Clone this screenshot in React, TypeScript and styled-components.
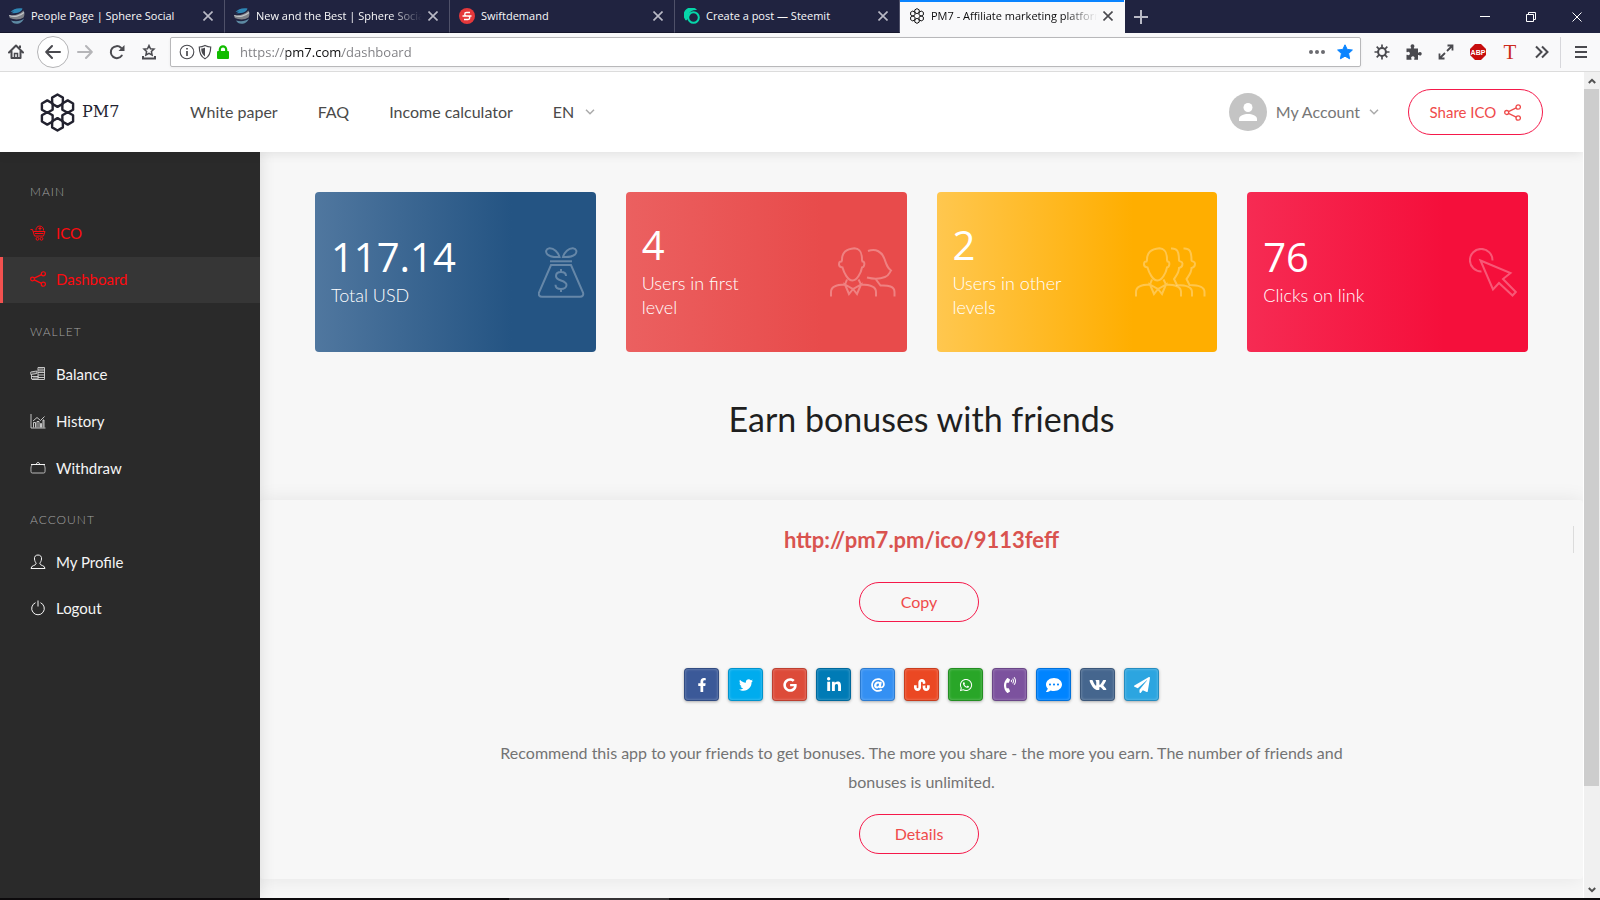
import React from "react";
import styled, { createGlobalStyle } from "styled-components";
import {
  FaFacebookF,
  FaTwitter,
  FaGoogle,
  FaLinkedinIn,
  FaAt,
  FaStumbleupon,
  FaWhatsapp,
  FaPhoneVolume,
  FaCommentDots,
  FaVk,
  FaPaperPlane,
} from "react-icons/fa";

const uiFont = `"Open Sans", "Noto Sans", sans-serif`;
const pageFont = `Lato, "Liberation Sans", sans-serif`;

const GlobalStyle = createGlobalStyle`
  *, *::before, *::after { box-sizing: border-box; }
  body { margin: 0; background: #f7f7f7; font-family: ${pageFont}; }
  button, select, input { font: inherit; color: inherit; background: none; border: 0; padding: 0; margin: 0; }
  button { cursor: pointer; }
  a { color: inherit; text-decoration: none; }
  h1, h2, p, ul { margin: 0; padding: 0; }
  ul { list-style: none; }
  svg { display: block; flex: none; }
`;

/* ---------- browser window ---------- */

const Window = styled.div`
  display: flex;
  flex-direction: column;
  min-height: 100vh;
`;

const TabStrip = styled.div`
  display: flex;
  height: 33px;
  background: #202340;
  color: #f9f9fa;
  font-family: ${uiFont};
  font-size: 11px;
  font-weight: 500;
`;

const Tab = styled.div<{ $active?: boolean }>`
  display: flex;
  align-items: center;
  flex: 0 1 225px;
  min-width: 0;
  gap: 6px;
  padding: 0 5px 0 9px;
  color: ${(p) => (p.$active ? "#0c0c0d" : "#f9f9fa")};
  background: ${(p) => (p.$active ? "#f9f9fa" : "transparent")};
  border-right: 1px solid ${(p) => (p.$active ? "#f9f9fa" : "#4f5169")};
  border-bottom: 1px solid ${(p) => (p.$active ? "#f9f9fa" : "#14162c")};
  box-shadow: ${(p) => (p.$active ? "inset 0 2px 0 #0a84ff" : "none")};
`;

const TabLabel = styled.button<{ $fade?: boolean }>`
  flex: 1;
  min-width: 0;
  overflow: hidden;
  white-space: nowrap;
  text-align: left;
  line-height: 20px;
  mask-image: ${(p) =>
    p.$fade ? "linear-gradient(to left, transparent, #000 32px)" : "none"};
`;

const TabClose = styled.button<{ $active?: boolean }>`
  display: grid;
  place-items: center;
  width: 22px;
  height: 22px;
  margin-left: -6px;
  color: ${(p) => (p.$active ? "#4a4a4f" : "#b9bac6")};
`;

const NewTab = styled.button`
  display: grid;
  place-items: center;
  width: 32px;
  color: #b9bac6;
`;

const WindowControls = styled.div`
  display: flex;
  margin-left: auto;
`;

const WindowButton = styled.button`
  display: grid;
  place-items: center;
  width: 46px;
  color: #fff;
`;

const Toolbar = styled.div`
  display: flex;
  align-items: center;
  height: 39px;
  padding-right: 3px;
  background: #f9f9fa;
  border-bottom: 1px solid #dcdcdc;
  color: #4a4a4f;
  z-index: 3;
`;

const ToolButton = styled.button<{ $dim?: boolean }>`
  display: grid;
  place-items: center;
  width: 32px;
  height: 32px;
  color: ${(p) => (p.$dim ? "#b5b5b8" : "inherit")};
`;

const BackButton = styled(ToolButton)`
  margin: 0 0 0 5px;
  background: #fff;
  border: 1px solid #b4b4b6;
  border-radius: 50%;
`;

const AddressBar = styled.div`
  display: flex;
  align-items: center;
  flex: 1;
  height: 30px;
  gap: 2px;
  margin: 0 5px;
  padding: 0 2px 0 8px;
  background: #fff;
  border: 1px solid #b8b8ba;
  border-radius: 2px;
  box-shadow: 0 1px 3px rgba(0, 0, 0, 0.06);
`;

const AddressInput = styled.input`
  flex: 1;
  min-width: 0;
  margin-left: 7px;
  font-family: ${uiFont};
  font-size: 13px;
  line-height: 20px;
  outline: none;
  -webkit-text-fill-color: transparent;
  background: linear-gradient(to right, #7c7c80 0 46px, #0c0c0d 46px 102px, #7c7c80 102px);
  background-clip: text;
`;

const AddressAction = styled.button`
  display: grid;
  place-items: center;
  width: 26px;
  height: 26px;
`;

const ToolSeparator = styled.span`
  width: 1px;
  height: 31px;
  margin: 0 4px 0 2px;
  background: #d7d7db;
`;

const Viewport = styled.div`
  display: flex;
  flex: 1;
  align-items: stretch;
`;

const ScrollTrack = styled.div`
  display: flex;
  flex-direction: column;
  width: 17px;
  border-left: 1px solid #fff;
  background: #f0f0f0;
  color: #505050;
  z-index: 3;
`;

const ScrollArrow = styled.button`
  display: grid;
  place-items: center;
  height: 17px;
`;

const ScrollThumb = styled.div`
  height: 88%;
  width: 15px;
  background: #cdcdcd;
`;

const ScrollRange = styled.div`
  flex: 1;
`;

const Taskbar = styled.div`
  display: flex;
  height: 2px;
  padding-left: 509px;
  background: #0d0b0d;
`;

const TaskbarItem = styled.span`
  width: 160px;
  background: #353335;
`;

/* ---------- web page ---------- */

const Page = styled.div`
  display: flex;
  flex-direction: column;
  flex: 1;
  min-width: 0;
`;

const Header = styled.header`
  display: flex;
  align-items: center;
  height: 80px;
  padding: 0 40px;
  background: #fff;
  color: #4a4a4a;
  font-size: 16px;
  line-height: 24px;
  box-shadow: 0 0 12px rgba(0, 0, 0, 0.12);
  z-index: 2;
`;

const Brand = styled.a`
  display: flex;
  align-items: center;
  gap: 7px;
  width: 150px;
  color: #22222f;
  font-family: "DejaVu Serif", serif;
  font-size: 16px;
`;

const MainNav = styled.nav`
  display: flex;
  align-items: center;
  gap: 40px;
`;

const SelectBox = styled.label`
  display: flex;
  align-items: center;
  gap: 10px;
`;

const LangSelect = styled.select`
  appearance: none;
  width: 22px;
  line-height: 24px;
`;

const HeaderRight = styled.div`
  display: flex;
  align-items: center;
  gap: 29px;
  margin-left: auto;
`;

const AccountButton = styled.button`
  display: flex;
  align-items: center;
  gap: 9px;
  color: #777;
`;

const Outline = styled.button`
  display: flex;
  align-items: center;
  justify-content: center;
  gap: 8px;
  width: 120px;
  height: 40px;
  margin-right: 5px;
  padding-bottom: 2px;
  color: #ef4b4b;
  font-size: 16px;
  border: 1px solid #f5194a;
  border-radius: 23px;
`;

const ShareIco = styled(Outline)`
  width: 135px;
  height: 46px;
  margin-right: 0;
  padding-bottom: 0;
  font-size: 15px;
`;

const Body = styled.div`
  display: flex;
  flex: 1;
`;

const Sidebar = styled.aside`
  width: 260px;
  flex: none;
  padding-top: 30px;
  background: #2a2a2a;
  box-shadow: 0 0 15px rgba(0, 0, 0, 0.12);
  z-index: 1;
`;

const MenuGroup = styled.section`
  margin-bottom: 19px;
`;

const MenuHeading = styled.h2`
  margin-bottom: 9px;
  padding-left: 30px;
  color: #a2a2a2;
  font-size: 12px;
  font-weight: 300;
  line-height: 20px;
  letter-spacing: 1px;
`;

const MenuList = styled.ul<{ $gap: number }>`
  display: grid;
  gap: ${(p) => p.$gap}px;
`;

const MenuLink = styled.a<{ $hot?: boolean; $active?: boolean }>`
  display: flex;
  align-items: center;
  gap: 10px;
  height: 46px;
  padding-left: ${(p) => (p.$active ? 27 : 30)}px;
  padding-bottom: ${(p) => (p.$hot ? 2 : 0)}px;
  border-left: ${(p) => (p.$active ? "3px solid #f2514f" : "0")};
  background: ${(p) => (p.$active ? "#363636" : "transparent")};
  color: ${(p) => (p.$hot ? "#ff0a0f" : "#f5f5f5")};
  font-size: 15px;
`;

const Content = styled.main`
  flex: 1;
  min-width: 0;
  padding: 40px 0 19px;
  background: #f7f7f7;
`;

const Cards = styled.div`
  display: grid;
  grid-template-columns: repeat(4, 1fr);
  gap: 30px;
  padding: 0 55px;
`;

const Card = styled.article<{ $from: string; $to: string }>`
  display: flex;
  align-items: center;
  justify-content: space-between;
  min-height: 160px;
  padding: 0 11px 0 16px;
  border-radius: 4px;
  background: linear-gradient(to right, ${(p) => p.$from}, ${(p) => p.$to} 70%);
  color: #fff;
`;

const CardText = styled.div`
  width: 130px;
`;

const CardValue = styled.div`
  margin-bottom: 6px;
  font-family: ${uiFont};
  font-size: 40px;
  font-weight: 500;
  line-height: 40px;
`;

const CardLabel = styled.div`
  font-size: 18px;
  font-weight: 300;
  line-height: 24px;
`;

const Title = styled.h1`
  padding: 43px 0 57px;
  color: #1f1f1f;
  font-size: 34px;
  font-weight: 400;
  line-height: 48px;
  text-align: center;
`;

const Panel = styled.section`
  display: flex;
  flex-direction: column;
  align-items: center;
  padding: 26px 0 25px;
  border-radius: 4px;
  background: #f7f7f7;
  box-shadow: 0 0 20px rgba(0, 0, 0, 0.08);
`;

const LinkRow = styled.div`
  display: grid;
  grid-template-columns: 1fr auto 1fr;
  width: 100%;
  margin-bottom: 29px;
`;

const RefLink = styled.a`
  grid-column: 2;
  color: #d9534f;
  font-size: 22px;
  font-weight: 700;
  line-height: 27px;
`;

const LinkRule = styled.span`
  justify-self: end;
  width: 1px;
  margin-right: 9px;
  background: #dcdcdc;
`;

const Shares = styled.div`
  display: flex;
  gap: 9px;
  padding: 46px 0 37px;
`;

const ShareButton = styled.button<{ $color: string; $size: number }>`
  display: grid;
  place-items: center;
  width: 35px;
  height: 33px;
  color: #fff;
  font-size: ${(p) => p.$size}px;
  border: 1px solid rgba(0, 0, 0, 0.14);
  border-radius: 4px;
  background: ${(p) => p.$color};
  box-shadow: inset 0 0 3px rgba(255, 255, 255, 0.35), 0 1px 3px rgba(0, 0, 0, 0.3);
`;

const Note = styled.p`
  max-width: 860px;
  margin-bottom: 18px;
  color: #737373;
  font-size: 16px;
  line-height: 29px;
  text-align: center;
`;

/* ---------- drawings ---------- */

const CloseIcon = ({ size = 10, width = 1.6 }: { size?: number; width?: number }) => (
  <svg width={size} height={size} viewBox="0 0 10 10" stroke="currentColor" strokeWidth={width} fill="none">
    <path d="M.5.5l9 9M9.5.5l-9 9" />
  </svg>
);

const SphereIcon = () => (
  <svg width="16" height="16" viewBox="0 0 16 16">
    <path d="M1.500 4C4 1.500 8-.5 13.500.5c-1 3.500-5 5-11.500 4.800C3 4.800 4 4.300 5 3.500z" fill="#2e86b5" />
    <path d="M0 7C5 8 11 6.500 14.500 2.500 16 5.500 15.500 7.500 14.500 9.500 11 12 5 12 .8 10z" fill="#7f8288" />
    <path d="M.3 7.500C5 9.500 11 8 15 4.500" stroke="#c3c6ca" strokeWidth="1.200" fill="none" />
    <path d="M2 12.500c5 1.500 9.500.8 13-2-1 3-4 5.300-7.500 5.300-2.500 0-4.500-1.300-5.500-3.300z" fill="#5d8aa3" />
  </svg>
);

const SwiftIcon = () => (
  <svg width="16" height="16" viewBox="0 0 16 16">
    <circle cx="8" cy="8" r="8" fill="#e5383b" />
    <path d="M11 4.500H7.500a1.700 1.700 0 000 3.500H9a1.700 1.700 0 010 3.500H5M3.500 8h9" stroke="#fff" strokeWidth="1.400" fill="none" />
  </svg>
);

const SteemIcon = () => (
  <svg width="16" height="16" viewBox="0 0 16 16">
    <path d="M2 12.500A7.500 7.500 0 0112.500 1.500C7 1.500 3 4.500 3.500 9c.2 1.500-.5 2.500-1.500 3.500z" fill="#06d6a9" />
    <path d="M2 12.500C-1 8-.5 3 4 1c4-1.800 8-.8 9 1-3-.5-7 .5-8 4-.8 2.500.2 4.500-3 6.500z" fill="#06d6a9" />
    <circle cx="9.500" cy="9.500" r="5.300" fill="none" stroke="#06d6a9" strokeWidth="2" />
  </svg>
);

const hexPath = (cx: number, cy: number, r: number) =>
  [90, 30, -30, -90, -150, 150]
    .map((deg, i) => {
      const a = (deg * Math.PI) / 180;
      return `${i ? "L" : "M"}${(cx + r * Math.cos(a)).toFixed(2)} ${(cy + r * Math.sin(a)).toFixed(2)}`;
    })
    .join("") + "Z";

const HexLogo = ({ width, height, stroke }: { width: number; height: number; stroke: number }) => (
  <svg width={width} height={height} viewBox="0 0 35 39" fill="none" stroke="currentColor" strokeWidth={stroke} strokeLinejoin="round">
    {[90, 30, -30, -90, -150, 150].map((deg) => {
      const a = (deg * Math.PI) / 180;
      return <path key={deg} d={hexPath(17.5 + 11.8 * Math.cos(a), 19.5 + 11.8 * Math.sin(a), 6.2)} />;
    })}
  </svg>
);

const Chevron = () => (
  <svg width="10" height="6" viewBox="0 0 10 6" fill="none" stroke="#aaa" strokeWidth="1.500">
    <path d="M1 .8l4 4 4-4" />
  </svg>
);

const ShareNodes = ({ size }: { size: number }) => (
  <svg width={size} height={size} viewBox="0 0 17 17" fill="none" stroke="currentColor" strokeWidth="1.300">
    <circle cx="2.700" cy="8.500" r="2" />
    <circle cx="14.200" cy="3" r="2.200" />
    <circle cx="14.200" cy="14" r="2.200" />
    <path d="M4.500 7.600l7.700-3.700M4.500 9.400l7.700 3.700" />
  </svg>
);

const lineIcon = { width: 16, height: 16, viewBox: "0 0 16 16", fill: "none", stroke: "currentColor", strokeWidth: 1 };

const CartIcon = () => (
  <svg {...lineIcon}>
    <path d="M.5 4.500h2l2 6.500h9l1.500-4.500H3.500" />
    <path d="M5 8.500h8.500M6 5.500A3.800 3.800 0 1113.500 5.500M10 2v3.500M8.500 3.500h3" />
    <circle cx="7.500" cy="13.800" r="1.400" />
    <circle cx="11.500" cy="13.800" r="1.400" />
  </svg>
);

const CoinsIcon = () => (
  <svg {...lineIcon} strokeWidth="0.9" opacity="0.85">
    <path d="M8 1.500h6.500v12H8zM8 4h6.500M8 6.500h6.500M8 9h6.500M8 11.500h6.500" />
    <path d="M.8 6l6-1v2.500l-6 1zM1.500 8.500v4.500h6M1.500 10.500h7M2 13.500h6" />
    <path d="M9 2.800h4.500M9 5.200h4.500M2 7h4M3 11.800h5" opacity=".6" />
  </svg>
);

const ChartIcon = () => (
  <svg {...lineIcon} strokeWidth="0.9" opacity="0.85">
    <path d="M1 1v14h14.500" />
    <path d="M3.500 14.500V9.500h2v5M7 14.500v-6h2v6M10.500 14.500v-4h1v4M13 14.500V7h1v7.500" />
    <path d="M3 8l4-3.500 3.500 3L14.500 3.500" />
  </svg>
);

const PurseIcon = () => (
  <svg {...lineIcon}>
    <path d="M1 4.500h14M6.500 4c0-2 3-2 3 0" />
    <path d="M2 5c-1.500 2-1 4-1 6.500 0 1 .5 1.500 1.500 1.500h11c1 0 1.500-.5 1.500-1.500 0-2.500.5-4.500-1-6.500" opacity=".7" />
  </svg>
);

const PersonIcon = () => (
  <svg {...lineIcon}>
    <path d="M8 1C5.500 1 4.200 2.700 4.500 5c.2 2 .8 3 1.700 4.200 0 2.800-5.200 1.800-5.200 5.300h14c0-3.500-5.200-2.500-5.200-5.300C10.700 8 11.300 7 11.500 5 11.800 2.700 10.500 1 8 1z" />
  </svg>
);

const PowerIcon = () => (
  <svg {...lineIcon}>
    <path d="M5.500 2.700a6.300 6.300 0 105 0M8 .5V6.500" />
  </svg>
);

const cardIcon = { fill: "none", stroke: "#fff", strokeOpacity: 0.3, strokeWidth: 2 };

const MoneyBag = () => (
  <svg width="47" height="51" viewBox="0 0 47 51" {...cardIcon}>
    <path d="M21.500 10C20 5 16 1 11.500 1.200 8 1.500 7 5 9.500 7.500c3 2.500 8 2.800 12 2.500z" />
    <path d="M25 10C26.500 5 30.500 1 35 1.200c3.500.3 4.500 3.800 2 6.300-3 2.500-8 2.800-12 2.500z" />
    <path d="M12 14.300h22" />
    <path d="M13 18h20l12 27.500c.8 2.500-.5 4.300-3 4.300H4c-2.500 0-3.800-1.800-3-4.300z" />
    <path d="M28 29c0-2.500-2-4-5-4s-5 1.500-5 4 2 3.500 5 4.500 5.500 2 5.500 4.500-2.500 4-5.500 4-5.500-1.500-5.500-4.200M23 22v3M23 42v3" />
  </svg>
);

const Gentleman = () => (
  <path d="M12 13C12 5 16 2 24.500 1.200 30 1.500 32 5 32 13l.5 1.500c1.500 0 2 1 1.800 3-.2 2-.8 2.800-2.300 3C31 26 27 33.500 22.500 33.500S14 26 12.500 20.500c-2-.2-3.500-1-3.500-3s.5-3.200 2.500-3zM17 32.500l-2 5C5 37.500 1 40 1 45v4.500M28.500 32.500l2.500 5c11 0 15 2.500 15 7.500v4.500M15 37.500l4 9.500 4-5 4 5 4-9.500-8 4.500z" />
);

const CoupleIcon = () => (
  <svg width="66" height="50" viewBox="0 0 66 50" {...cardIcon}>
    <Gentleman />
    <path d="M38 4c8-3 14 1 16.500 8 2 6 3 9 6.500 11.500-2 3-2 5-6 6.500-5 2-10 2.500-18 .5M46 32.500l4.500 6c8-.5 14 1 14 6.500v4.500" />
  </svg>
);

const GroupIcon = () => (
  <svg width="71" height="50" viewBox="0 0 71 50" {...cardIcon}>
    <Gentleman />
    <path d="M36 1.500c6-.5 8 2.500 8 12 0 1 3.500 1 3.500 3s-1 4-3.500 4.500c0 5-3 8-5 11l3 6c10 0 15 2 15 7v4.500" />
    <path d="M48.500 1.500c6-.5 8 2.500 8 12 0 1 3.500 1 3.500 3s-1 4-3.500 4.500c0 5-3 8-5 11l3 6c10 0 15 2 15 7v4.500" />
  </svg>
);

const ClickIcon = () => (
  <svg width="48" height="49" viewBox="0 0 48 49" {...cardIcon}>
    <path d="M12.500 23.500A11.300 11.300 0 1123.500 12.500" />
    <path d="M11.500 12.500l30 12.500-7.500 6 12.800 13-3.300 3.500L30 35l-6 6.500z" />
  </svg>
);

const Avatar = () => (
  <svg width="38" height="38" viewBox="0 0 38 38">
    <circle cx="19" cy="19" r="19" fill="#c4c4c4" />
    <circle cx="19" cy="14.500" r="4.500" fill="#fff" />
    <path d="M10 28v-2c0-3.500 5-5 9-5s9 1.500 9 5v2z" fill="#fff" />
  </svg>
);

const tool = { width: 16, height: 16, viewBox: "0 0 16 16", fill: "none", stroke: "currentColor", strokeWidth: 2 };

const HomeIcon = () => (
  <svg {...tool}>
    <path d="M1 8.500l7-7 7 7M3.500 7.500V14h9V7.500" strokeLinejoin="round" strokeLinecap="round" />
    <path d="M6.500 14V9.500h3V14" strokeWidth="1.500" />
    <path d="M12 1.500V4" />
  </svg>
);
const BackIcon = () => (
  <svg {...tool} strokeLinecap="round" strokeLinejoin="round">
    <path d="M15 8H1.500M7 2L1.200 8 7 14" />
  </svg>
);
const ForwardIcon = () => (
  <svg {...tool} strokeLinecap="round" strokeLinejoin="round">
    <path d="M1 8h13.500M9 2l5.800 6L9 14" />
  </svg>
);
const ReloadIcon = () => (
  <svg {...tool}>
    <path d="M12.800 11.500A6 6 0 1112 3.800" strokeLinecap="round" />
    <path d="M15.500 1v6h-6z" fill="currentColor" stroke="none" />
  </svg>
);
const TrayStarIcon = () => (
  <svg {...tool}>
    <path d="M8 1.500l1.500 3.200 3.500.4-2.600 2.400.7 3.500L8 9.300 4.900 11l.7-3.500L3 5.100l3.500-.4z" strokeWidth="1.500" />
    <path d="M2 12v2.500h12V12" />
  </svg>
);
const InfoIcon = () => (
  <svg {...tool} strokeWidth="1.100">
    <circle cx="8" cy="8" r="6.800" />
    <path d="M8 7v5M8 4v1.600" strokeWidth="1.700" />
  </svg>
);
const ShieldIcon = () => (
  <svg {...tool} strokeWidth="1.200">
    <path d="M8 1.500C6 2.500 4 3 2.300 3c0 6 1.200 9.500 5.700 11.800C12.500 12.500 13.700 9 13.700 3 12 3 10 2.500 8 1.500z" />
    <path d="M8 3.500v9C5 10.500 4.300 8 4.200 4.600 5.500 4.500 7 4.100 8 3.500z" fill="currentColor" stroke="none" />
  </svg>
);
const LockIcon = () => (
  <svg {...tool}>
    <rect x="2" y="7" width="12" height="8" rx="1" fill="#12bc00" stroke="none" />
    <path d="M4.800 8V5.500a3.200 3.200 0 016.400 0V8" stroke="#12bc00" strokeWidth="2.200" />
  </svg>
);
const DotsIcon = () => (
  <svg {...tool} fill="#6b6b70" stroke="none">
    <circle cx="2" cy="8" r="2" />
    <circle cx="8" cy="8" r="2" />
    <circle cx="14" cy="8" r="2" />
  </svg>
);
const StarIcon = () => (
  <svg {...tool} fill="#0a84ff" stroke="#0a84ff" strokeWidth="1" strokeLinejoin="round">
    <path d="M8 .8l2.200 4.600 5.200.6-3.800 3.500 1 5.300L8 12.200l-4.600 2.600 1-5.300L.6 6l5.200-.6z" />
  </svg>
);
const GearIcon = () => (
  <svg {...tool}>
    <circle cx="8" cy="8" r="3.900" />
    <path d="M8 .5V4M8 12v3.500M.5 8H4M12 8h3.500M2.700 2.700l2.400 2.400M10.900 10.900l2.400 2.400M2.700 13.300l2.400-2.400M10.900 5.100l2.400-2.400" strokeWidth="1.700" />
  </svg>
);
const PuzzleIcon = () => (
  <svg {...tool} fill="currentColor" stroke="none">
    <path d="M.5 4.500h4.300c.6 0 .5-.7.100-1.200C4 1.800 5 .3 6.500.3s2.500 1.500 1.600 3c-.4.500-.5 1.200.1 1.200H12v3.700c0 .6.700.5 1.200.1 1.300-.8 2.500 0 2.500 1.500s-1.200 2.300-2.500 1.500c-.5-.4-1.200-.5-1.200.1v4.300H8.500c-.6 0-.5-.7-.1-1.200.6-1-.2-2.200-1.500-2.200s-2.200 1.200-1.600 2.200c.4.500.5 1.200-.1 1.200H.5v-4.500c0-.6.700-.5 1.200-.1 1 .6 2.200-.2 2.200-1.500S2.700 7.300 1.700 7.900C1.200 8.300.5 8.400.5 7.800z" />
  </svg>
);
const ExpandIcon = () => (
  <svg {...tool} strokeWidth="1.800">
    <path d="M9.500 1.500h5v5M14 2L9 7M6.500 14.500h-5v-5M2 14l5-5" />
  </svg>
);
const AbpIcon = () => (
  <svg {...tool} stroke="none">
    <path d="M5 0h6l5 5v6l-5 5H5l-5-5V5z" fill="#c70d0d" />
    <text x="8" y="10.500" textAnchor="middle" fill="#fff" fontFamily="Liberation Sans, sans-serif" fontWeight="700" fontSize="7">
      ABP
    </text>
  </svg>
);
const TextIcon = () => (
  <svg {...tool} stroke="none">
    <text x="8" y="15" textAnchor="middle" fill="#cc2a1c" fontFamily="Liberation Serif, serif" fontSize="21">
      T
    </text>
  </svg>
);
const MoreIcon = () => (
  <svg {...tool}>
    <path d="M2 2.500L7.500 8 2 13.500M8 2.500L13.500 8 8 13.500" />
  </svg>
);
const MenuIcon = () => (
  <svg {...tool}>
    <path d="M2 3h12M2 8h12M2 13h12" />
  </svg>
);

/* ---------- data ---------- */

const tabs = [
  { label: "People Page | Sphere Social", icon: <SphereIcon /> },
  { label: "New and the Best | Sphere Social", icon: <SphereIcon />, fade: true },
  { label: "Swiftdemand", icon: <SwiftIcon /> },
  { label: "Create a post — Steemit", icon: <SteemIcon /> },
  {
    label: "PM7 - Affiliate marketing platform",
    icon: <HexLogo width={16} height={16} stroke={2.4} />,
    fade: true,
    active: true,
  },
];

const menu = [
  {
    heading: "MAIN",
    gap: 0,
    items: [
      { label: "ICO", icon: <CartIcon />, hot: true },
      { label: "Dashboard", icon: <ShareNodes size={16} />, hot: true, active: true },
    ],
  },
  {
    heading: "WALLET",
    gap: 1,
    items: [
      { label: "Balance", icon: <CoinsIcon /> },
      { label: "History", icon: <ChartIcon /> },
      { label: "Withdraw", icon: <PurseIcon /> },
    ],
  },
  {
    heading: "ACCOUNT",
    gap: 0,
    items: [
      { label: "My Profile", icon: <PersonIcon /> },
      { label: "Logout", icon: <PowerIcon /> },
    ],
  },
] as {
  heading: string;
  gap: number;
  items: { label: string; icon: React.ReactNode; hot?: boolean; active?: boolean }[];
}[];

const cards = [
  { value: "117.14", label: "Total USD", icon: <MoneyBag />, from: "#50779f", to: "#245483" },
  { value: "4", label: "Users in first level", icon: <CoupleIcon />, from: "#eb6060", to: "#e84b4b" },
  { value: "2", label: "Users in other levels", icon: <GroupIcon />, from: "#ffc74f", to: "#ffae00" },
  { value: "76", label: "Clicks on link", icon: <ClickIcon />, from: "#f62b53", to: "#f50f3b" },
];

const shares = [
  { name: "Facebook", color: "#3b5998", size: 14, Icon: FaFacebookF },
  { name: "Twitter", color: "#00acee", size: 14, Icon: FaTwitter },
  { name: "Google", color: "#dd4b39", size: 14, Icon: FaGoogle },
  { name: "LinkedIn", color: "#007bb6", size: 16, Icon: FaLinkedinIn },
  { name: "Email", color: "#3490f3", size: 14, Icon: FaAt },
  { name: "StumbleUpon", color: "#eb4823", size: 16, Icon: FaStumbleupon },
  { name: "WhatsApp", color: "#29a628", size: 14, Icon: FaWhatsapp },
  { name: "Viber", color: "#7c529e", size: 16, Icon: FaPhoneVolume },
  { name: "Messenger", color: "#0084ff", size: 16, Icon: FaCommentDots },
  { name: "VK", color: "#45668e", size: 18, Icon: FaVk },
  { name: "Telegram", color: "#2ca5e0", size: 16, Icon: FaPaperPlane },
];

/* ---------- app ---------- */

const BrowserTabs = () => (
  <TabStrip>
    {tabs.map((t) => (
      <Tab key={t.label} $active={t.active}>
        {t.icon}
        <TabLabel $fade={t.fade}>{t.label}</TabLabel>
        <TabClose $active={t.active} aria-label="Close tab">
          <CloseIcon />
        </TabClose>
      </Tab>
    ))}
    <NewTab aria-label="New tab">
      <svg width="14" height="14" viewBox="0 0 14 14" stroke="currentColor" strokeWidth="2">
        <path d="M7 0v14M0 7h14" />
      </svg>
    </NewTab>
    <WindowControls>
      <WindowButton aria-label="Minimize">
        <svg width="10" height="10" viewBox="0 0 10 10" stroke="currentColor">
          <path d="M0 4.500h10" />
        </svg>
      </WindowButton>
      <WindowButton aria-label="Restore">
        <svg width="10" height="10" viewBox="0 0 10 10" stroke="currentColor" fill="none">
          <path d="M.5 2.500h7v7h-7zM2.500 2.500v-2h7v7h-2" />
        </svg>
      </WindowButton>
      <WindowButton aria-label="Close window">
        <CloseIcon width={1} />
      </WindowButton>
    </WindowControls>
  </TabStrip>
);

const BrowserToolbar = () => (
  <Toolbar>
    <ToolButton aria-label="Home"><HomeIcon /></ToolButton>
    <BackButton aria-label="Back"><BackIcon /></BackButton>
    <ToolButton $dim aria-label="Forward"><ForwardIcon /></ToolButton>
    <ToolButton aria-label="Reload"><ReloadIcon /></ToolButton>
    <ToolButton aria-label="Bookmarks"><TrayStarIcon /></ToolButton>
    <AddressBar>
      <InfoIcon />
      <ShieldIcon />
      <LockIcon />
      <AddressInput aria-label="Address" defaultValue="https://pm7.com/dashboard" />
      <AddressAction aria-label="Page actions"><DotsIcon /></AddressAction>
      <AddressAction aria-label="Bookmark this page"><StarIcon /></AddressAction>
    </AddressBar>
    <ToolButton aria-label="Settings"><GearIcon /></ToolButton>
    <ToolButton aria-label="Extensions"><PuzzleIcon /></ToolButton>
    <ToolButton aria-label="Full screen"><ExpandIcon /></ToolButton>
    <ToolButton aria-label="Ad blocker"><AbpIcon /></ToolButton>
    <ToolButton aria-label="Text tool"><TextIcon /></ToolButton>
    <ToolButton aria-label="More tools"><MoreIcon /></ToolButton>
    <ToolSeparator />
    <ToolButton aria-label="Menu"><MenuIcon /></ToolButton>
  </Toolbar>
);

const PageHeader = () => (
  <Header>
    <Brand href="#">
      <HexLogo width={35} height={39} stroke={2.4} />
      PM7
    </Brand>
    <MainNav>
      <a href="#">White paper</a>
      <a href="#">FAQ</a>
      <a href="#">Income calculator</a>
      <SelectBox>
        <LangSelect aria-label="Language">
          <option>EN</option>
        </LangSelect>
        <Chevron />
      </SelectBox>
    </MainNav>
    <HeaderRight>
      <AccountButton>
        <Avatar />
        My Account
        <Chevron />
      </AccountButton>
      <ShareIco>
        Share ICO
        <ShareNodes size={17} />
      </ShareIco>
    </HeaderRight>
  </Header>
);

const SideMenu = () => (
  <Sidebar>
    {menu.map((group) => (
      <MenuGroup key={group.heading}>
        <MenuHeading>{group.heading}</MenuHeading>
        <MenuList $gap={group.gap}>
          {group.items.map((item) => (
            <li key={item.label}>
              <MenuLink href="#" $hot={item.hot} $active={item.active}>
                {item.icon}
                {item.label}
              </MenuLink>
            </li>
          ))}
        </MenuList>
      </MenuGroup>
    ))}
  </Sidebar>
);

export default function App() {
  return (
    <>
      <GlobalStyle />
      <Window>
        <BrowserTabs />
        <BrowserToolbar />
        <Viewport>
          <Page>
            <PageHeader />
            <Body>
              <SideMenu />
              <Content>
                <Cards>
                  {cards.map((c) => (
                    <Card key={c.label} $from={c.from} $to={c.to}>
                      <CardText>
                        <CardValue>{c.value}</CardValue>
                        <CardLabel>{c.label}</CardLabel>
                      </CardText>
                      {c.icon}
                    </Card>
                  ))}
                </Cards>
                <Title>Earn bonuses with friends</Title>
                <Panel>
                  <LinkRow>
                    <RefLink href="#">http://pm7.pm/ico/9113feff</RefLink>
                    <LinkRule />
                  </LinkRow>
                  <Outline>Copy</Outline>
                  <Shares>
                    {shares.map(({ name, color, size, Icon }) => (
                      <ShareButton key={name} $color={color} $size={size} aria-label={name}>
                        <Icon />
                      </ShareButton>
                    ))}
                  </Shares>
                  <Note>
                    Recommend this app to your friends to get bonuses. The more you share - the more you
                    earn. The number of friends and bonuses is unlimited.
                  </Note>
                  <Outline>Details</Outline>
                </Panel>
              </Content>
            </Body>
          </Page>
          <ScrollTrack>
            <ScrollArrow aria-label="Scroll up">
              <svg width="8" height="6" viewBox="0 0 8 6" fill="none" stroke="currentColor" strokeWidth="2">
                <path d="M.8 5L4 1.800 7.200 5" />
              </svg>
            </ScrollArrow>
            <ScrollRange>
              <ScrollThumb />
            </ScrollRange>
            <ScrollArrow aria-label="Scroll down">
              <svg width="8" height="6" viewBox="0 0 8 6" fill="none" stroke="currentColor" strokeWidth="2">
                <path d="M.8 1L4 4.200 7.200 1" />
              </svg>
            </ScrollArrow>
          </ScrollTrack>
        </Viewport>
        <Taskbar>
          <TaskbarItem />
        </Taskbar>
      </Window>
    </>
  );
}
